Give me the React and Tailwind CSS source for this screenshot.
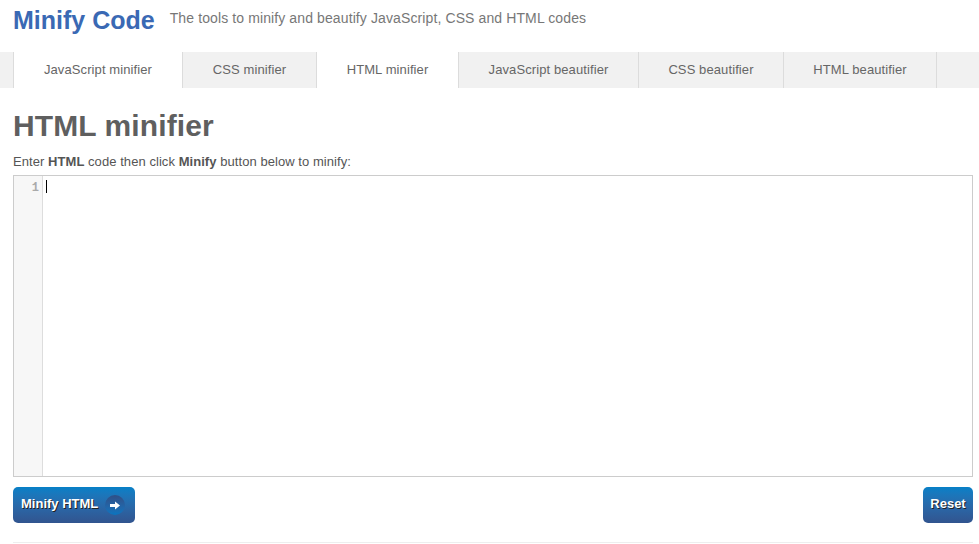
const tabs = [
  { label: "JavaScript minifier", w: "w-[170px]", active: true },
  { label: "CSS minifier", w: "w-[134px]" },
  { label: "HTML minifier", w: "w-[142px]", active: true },
  { label: "JavaScript beautifier", w: "w-[180px]" },
  { label: "CSS beautifier", w: "w-[145px]" },
  { label: "HTML beautifier", w: "w-[153px]" },
];

export default function App() {
  return (
    <div className="w-[979px] h-[544px] overflow-hidden bg-white font-['Liberation_Sans',Arial,sans-serif] text-[#555]">
      <header className="h-[52px] pl-[13px] pt-[4px] flex items-start">
        <h1 className="text-[25px] leading-[32px] font-bold text-[#3a69b4]">Minify Code</h1>
        <p className="ml-[15px] text-[14px] tracking-[0.11px] leading-[28px] text-[#777]">The tools to minify and beautify JavaScript, CSS and HTML codes</p>
      </header>
      <nav className="h-[36px] bg-[#f1f1f1] pl-[13px] flex">
        {tabs.map((t) => (
          <div
            key={t.label}
            className={`${t.w} ${t.active ? "bg-white" : ""} border-r border-[#dcdcdc] first:border-l text-center text-[13px] tracking-[0.1px] leading-[36px] text-[#666]`}
          >
            {t.label}
          </div>
        ))}
      </nav>
      <main className="pl-[13px] pr-[6px]">
        <h2 className="mt-[18px] text-[30px] tracking-[0.1px] leading-[40px] font-bold text-[#5f5f5f]">HTML minifier</h2>
        <p className="mt-[7px] text-[13px] tracking-[0.06px] leading-[18px] text-[#555]">
          Enter <b>HTML</b> code then click <b>Minify</b> button below to minify:
        </p>
        <div className="mt-[4px] h-[302px] border border-[#cccccc] flex">
          <div className="w-[29px] bg-[#f7f7f7] border-r border-[#dddddd] text-right pr-[3px] pt-[5px] font-['Liberation_Mono',monospace] text-[12px] font-bold leading-[15px] text-[#aaa]">1</div>
          <div className="pl-[3px] pt-[4px]">
            <div className="w-px h-[13px] bg-black" />
          </div>
        </div>
        <div className="mt-[10px] flex justify-between">
          <button className="h-[36px] w-[122px] rounded-[5px] bg-linear-to-b from-[#0580c7] to-[#31548f] text-white text-[13px] font-bold flex items-center pl-[8px] [text-shadow:1px_1px_0_#222]">
            <span className="pb-[2px]">Minify HTML</span>
            <span className="ml-[7px] w-[20px] h-[20px] rounded-full bg-linear-to-b from-[#2f4f86] to-[#0575c0] flex items-center justify-center">
              <svg width="10" height="9" viewBox="0 0 10 9"><path d="M0 3h5V0.5L10 4.5 5 8.5V6H0z" fill="#fff" /></svg>
            </span>
          </button>
          <button className="h-[36px] w-[50px] rounded-[5px] bg-linear-to-b from-[#0580c7] to-[#31548f] text-white text-[13px] font-bold pb-[2px] [text-shadow:1px_1px_0_#222]">
            Reset
          </button>
        </div>
        <div className="mt-[19px] border-t border-[#eeeeee]" />
      </main>
    </div>
  );
}
